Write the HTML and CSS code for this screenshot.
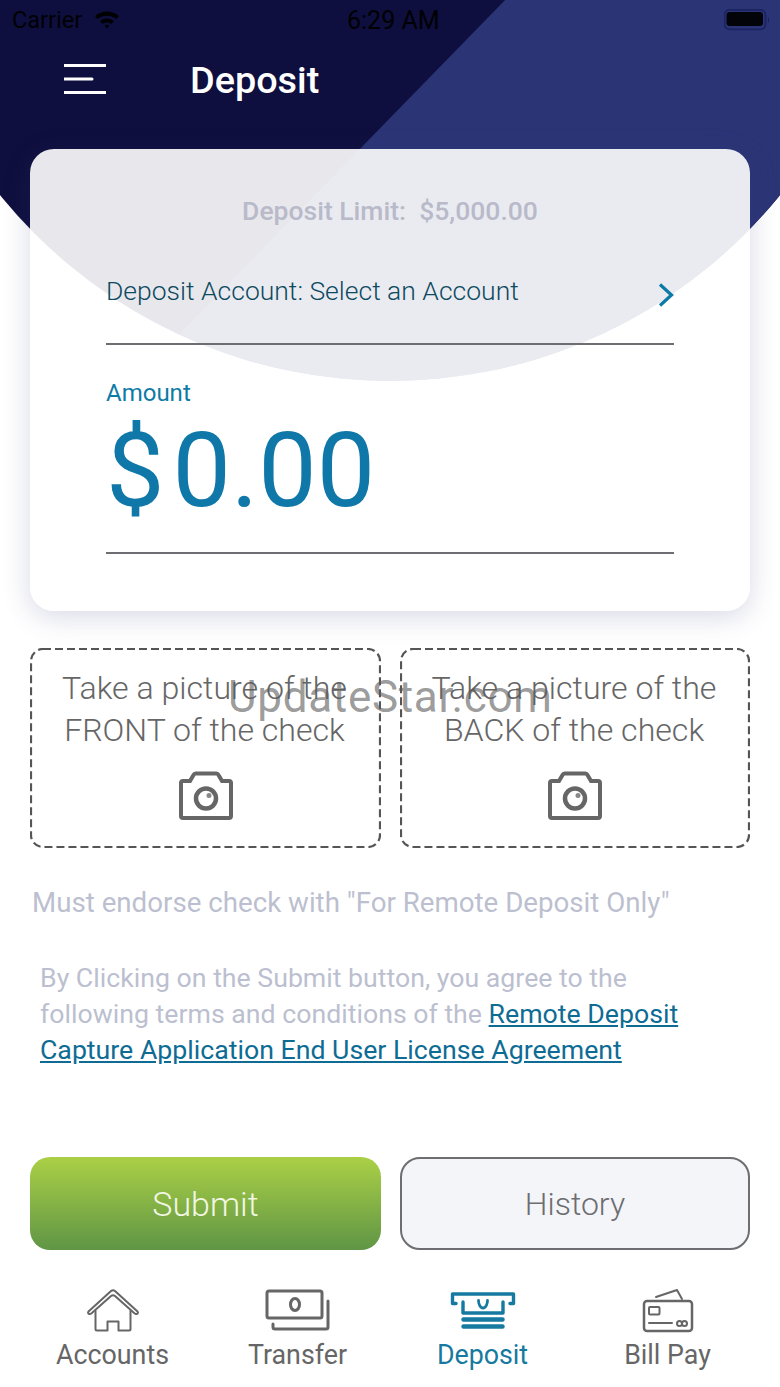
FILE: index.html
```html
<!DOCTYPE html>
<html lang="en">
<head>
<meta charset="utf-8">
<title>Deposit</title>
<link rel="stylesheet" href="styles.css">
</head>
<body>
<div class="page">
  <svg class="hero" viewBox="0 0 780 400" width="780" height="400" aria-hidden="true">
    <defs><clipPath id="disc"><circle cx="390" cy="-121" r="502"/></clipPath></defs>
    <g clip-path="url(#disc)">
      <rect x="0" y="-10" width="780" height="410" fill="#0e0f3e"/>
      <polygon points="510,-5 780,-5 780,400 115,400" fill="#2b3576"/>
    </g>
  </svg>

  <div class="status">
    <div class="status-left">
      <span>Carrier</span>
      <svg width="26" height="20" viewBox="0 0 26 20"><path d="M1 7c7-6 17-6 24 0l-2.6 3c-5.500-4.500-13.300-4.500-18.800 0zM6 12c4-3.500 10-3.500 14 0l-2.600 3c-2.600-2-6.200-2-8.800 0zM10.500 16.500c1.500-1 3.500-1 5 0L13 19.500z" fill="#000"/></svg>
    </div>
    <span class="status-time">6:29 AM</span>
    <svg class="battery" width="46" height="22" viewBox="0 0 46 22"><rect x="0.500" y="0.800" width="41" height="19.500" rx="5" fill="none" stroke="#1a2260" stroke-width="1.800"/><rect x="2.500" y="3" width="36.500" height="14" rx="3" fill="#000"/><path d="M44 8c1.500.5 1.500 5.500 0 6z" fill="#1a2260"/></svg>
  </div>

  <header class="topbar">
    <svg class="menu" width="42" height="30" viewBox="0 0 42 30"><path d="M0 1.500h42M0 15h28M0 28.500h42" stroke="#fff" stroke-width="3" stroke-linecap="round" fill="none"/></svg>
    <h1 class="title">Deposit</h1>
  </header>

  <main class="card">
    <p class="limit">Deposit Limit:&nbsp; $5,000.00</p>
    <div class="account">
      <span class="account-text">Deposit Account: Select an Account</span>
      <svg class="chevron" width="16" height="24" viewBox="0 0 16 24"><path d="M2 1.500 13.500 12 2 22.500" fill="none" stroke="#0b7aa6" stroke-width="3.200"/></svg>
    </div>
    <div class="amount">
      <div class="amount-label">Amount</div>
      <div class="amount-value"><span class="amount-sign">$</span>0.00</div>
    </div>
  </main>

  <section class="captures">
    <div class="capture">
      <svg class="capture-frame" width="351" height="200" viewBox="0 0 351 200"><rect x="1" y="1" width="349" height="198" rx="12"/></svg>
      <p class="capture-text">Take a picture of the<br>FRONT of the check</p>
      <svg class="camera" width="56" height="50" viewBox="0 0 56 50"><path d="M3 12c0-1.500.5-2 2-2h7l3.500-6c.4-.8 1-1.500 2-1.500h21c1 0 1.600.7 2 1.500l3.500 6h7c1.500 0 2 .5 2 2v33c0 1.500-.5 2-2 2H5c-1.500 0-2-.5-2-2z" fill="none" stroke="#666" stroke-width="4"/><circle cx="28" cy="27.500" r="10" fill="none" stroke="#666" stroke-width="4.500"/><circle cx="31" cy="24.500" r="2.500" fill="#888"/></svg>
    </div>
    <div class="capture">
      <svg class="capture-frame" width="350" height="200" viewBox="0 0 350 200"><rect x="1" y="1" width="348" height="198" rx="12"/></svg>
      <p class="capture-text">Take a picture of the<br>BACK of the check</p>
      <svg class="camera" width="56" height="50" viewBox="0 0 56 50"><path d="M3 12c0-1.500.5-2 2-2h7l3.500-6c.4-.8 1-1.500 2-1.500h21c1 0 1.600.7 2 1.500l3.500 6h7c1.500 0 2 .5 2 2v33c0 1.500-.5 2-2 2H5c-1.500 0-2-.5-2-2z" fill="none" stroke="#666" stroke-width="4"/><circle cx="28" cy="27.500" r="10" fill="none" stroke="#666" stroke-width="4.500"/><circle cx="31" cy="24.500" r="2.500" fill="#888"/></svg>
    </div>
  </section>

  <p class="endorse">Must endorse check with "For Remote Deposit Only"</p>
  <p class="terms">By Clicking on the Submit button, you agree to the following terms and conditions of the <a class="terms-link" href="#">Remote Deposit Capture Application End User License Agreement</a></p>

  <div class="actions">
    <button class="btn btn-submit" type="button">Submit</button>
    <button class="btn btn-history" type="button">History</button>
  </div>

  <nav class="tabs">
    <div class="tab">
      <svg class="tab-icon" width="60" height="46" viewBox="0 0 60 46"><g fill="none" stroke="#666" stroke-width="2" stroke-linejoin="round" stroke-linecap="round"><path d="M5.500 23.500 28 3c1.200-1 2.800-1 4 0l22.500 20.500c1 1 .2 2.800-1.500 2.500-.5 0-1-.3-1.300-.6L32 8c-1.200-1-2.800-1-4 0L8.300 25.400c-.3.300-.8.600-1.300.6-1.700.3-2.500-1.500-1.500-2.500z"/><path d="M12.500 23v18c0 .8.500 1.500 1.500 1.500h10.500V33.500h11v9H46c1 0 1.500-.7 1.500-1.500V23"/></g></svg>
      <span class="tab-label">Accounts</span>
    </div>
    <div class="tab">
      <svg class="tab-icon" width="66" height="46" viewBox="0 0 66 46"><g fill="none" stroke="#666" stroke-linecap="round"><rect x="2" y="3" width="55" height="27" rx="2" stroke-width="3"/><ellipse cx="30" cy="16.500" rx="4.500" ry="6" stroke-width="3"/><path d="M63 13v26c0 1-.5 2-2 2H10c-1.500 0-2-1-2-2v-3" stroke-width="3"/></g></svg>
      <span class="tab-label">Transfer</span>
    </div>
    <div class="tab tab-active">
      <svg class="tab-icon" width="66" height="46" viewBox="0 0 66 46"><g fill="none" stroke="#16799f" stroke-linecap="round" stroke-linejoin="round"><path d="M6 15.500H2.500V6h61v9.500H60" stroke-width="3.400"/><path d="M13 14v11h40V14" stroke-width="3.400"/><path d="M28.500 12.500c0 3 1.500 7.500 4.500 7.500s4.500-4.500 4.500-7.500" stroke-width="2.800"/><path d="M13.500 31.500h39M13.500 38.500h39" stroke-width="4.500"/></g></svg>
      <span class="tab-label">Deposit</span>
    </div>
    <div class="tab">
      <svg class="tab-icon" width="54" height="46" viewBox="0 0 54 46"><g fill="none" stroke="#666" stroke-linecap="round" stroke-linejoin="round"><rect x="3" y="13" width="48" height="30" rx="3" stroke-width="2.500"/><path d="M15 9 36 2l5 9" stroke-width="2"/><rect x="8" y="19" width="10.500" height="7.500" rx="1" stroke-width="2"/><path d="M8 35h23" stroke-width="2"/><circle cx="38.500" cy="35.500" r="2.500" stroke-width="2"/><circle cx="43.500" cy="35.500" r="2.500" stroke-width="2"/></g></svg>
      <span class="tab-label">Bill Pay</span>
    </div>
  </nav>

  <div class="watermark">UpdateStar.com</div>
</div>
</body>
</html>
```

FILE: styles.css
```css
* { box-sizing: border-box; }
html, body { margin: 0; padding: 0; background: #fff; }
body { font-family: Roboto, "Liberation Sans", sans-serif; }
.page { position: relative; width: 780px; height: 1387px; overflow: hidden; background: #fff; }
.hero { position: absolute; left: 0; top: 0; }

.status { position: relative; height: 40px; padding: 0 12px 0; display: flex; align-items: center; justify-content: space-between; color: #000; font-size: 23.500px; opacity: .92; }
.status-left { display: flex; align-items: center; gap: 12px; width: 150px; }
.status-left svg { margin-bottom: 2px; }
.status-time { margin-left: 185px; margin-right: auto; font-size: 25px; }
.battery { margin-right: -2px; }

.topbar { position: relative; height: 109px; display: flex; align-items: flex-start; padding: 10px 0 0 64px; }
.menu { margin-top: 14px; flex: none; }
.title { margin: 6px 0 0 84px; font-size: 37.800px; line-height: 48px; font-weight: 500; color: #fff; }

.card { position: relative; margin: 0 30px; height: 462px; padding: 44px 76px 0; border-radius: 24px; background: rgba(255,255,255,.9); box-shadow: 0 6px 28px rgba(60,65,130,.2); }
.limit { margin: 0; text-align: center; font-size: 26.500px; line-height: 36px; font-weight: 500; color: #b8bac9; }
.account { height: 116px; padding-top: 44px; display: flex; justify-content: space-between; align-items: flex-start; border-bottom: 2px solid #6d6d72; }
.account-text { font-size: 26.500px; line-height: 36px; font-weight: 300; color: #0d4a5f; }
.chevron { margin-top: 10px; }
.amount { height: 209px; border-bottom: 2px solid #6d6d72; padding-top: 32px; }
.amount-label { font-size: 24px; line-height: 32px; color: #0f7ba6; }
.amount-value { margin-top: 7px; font-size: 104px; line-height: 110px; color: #0f78a8; }
.amount-sign { margin-right: 8px; }

.captures { margin: 37px 30px 0; display: grid; grid-template-columns: 351px 350px; column-gap: 19px; }
.capture { position: relative; height: 200px; display: flex; flex-direction: column; align-items: center; padding-top: 17px; }
.capture-frame { position: absolute; left: 0; top: 0; }
.capture-frame rect { fill: none; stroke: #555; stroke-width: 2.200px; stroke-dasharray: 8 4; }
.capture-text { margin: 2px 2px 0 0; font-size: 32.100px; line-height: 42px; font-weight: 300; text-align: center; color: #666; white-space: nowrap; }
.camera { margin-top: 20px; }

.endorse { margin: 37px 0 0 32px; font-size: 27.700px; line-height: 36px; font-weight: 400; color: #bcbfcf; white-space: nowrap; }
.terms { margin: 39px 0 0 40px; width: 670px; font-size: 26.700px; line-height: 36px; font-weight: 400; color: #bcbfcf; }
.terms-link { color: #0e6c94; text-decoration: underline; }

.actions { position: relative; margin: 89px 30px 0; display: grid; grid-template-columns: 351px 350px; column-gap: 19px; }
.btn { height: 93px; border-radius: 20px; font-family: inherit; font-size: 34px; font-weight: 300; padding: 1px 0 0; }
.btn-submit { border: 0; color: #f2f7e4; background: linear-gradient(#abd046, #5f9545); }
.btn-history { border: 2px solid #6d6d72; color: #6d6d72; background: #f4f5f8; font-size: 32px; }

.tabs { position: relative; margin-top: 38px; padding: 0 20px; display: grid; grid-template-columns: repeat(4, 185px); }
.tab { display: flex; flex-direction: column; align-items: center; color: #666; }
.tab-icon { display: block; }
.tab-label { margin-top: 3px; font-size: 26.800px; line-height: 36px; }
.tab-active { color: #16799f; }

.watermark { position: absolute; left: 228px; top: 673px; font-size: 44px; line-height: 48px; color: rgba(90,90,90,.62); white-space: nowrap; letter-spacing: .7px; }
```
